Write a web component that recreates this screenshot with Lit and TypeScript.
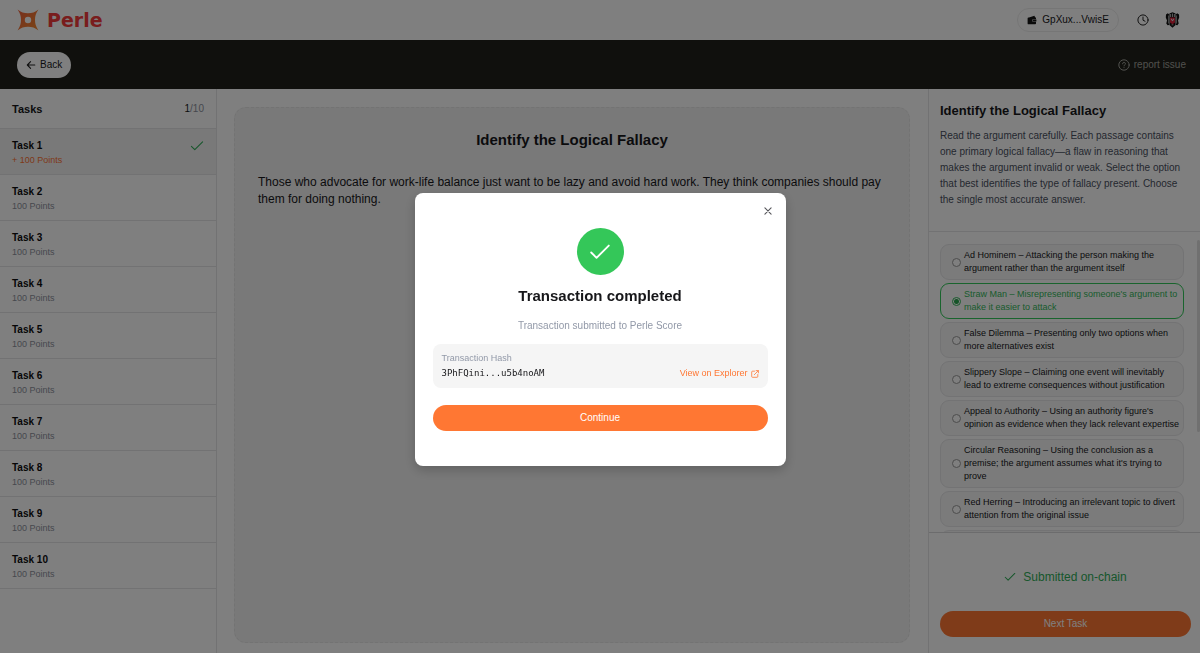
import { LitElement, html, css, svg } from "lit";
import { customElement, state } from "lit/decorators.js";
import { classMap } from "lit/directives/class-map.js";

const tasks = Array.from({ length: 10 }, (_, i) => ({ id: i + 1, points: 100, done: i === 0 }));

const options = [
  "Ad Hominem – Attacking the person making the argument rather than the argument itself",
  "Straw Man – Misrepresenting someone's argument to make it easier to attack",
  "False Dilemma – Presenting only two options when more alternatives exist",
  "Slippery Slope – Claiming one event will inevitably lead to extreme consequences without justification",
  "Appeal to Authority – Using an authority figure's opinion as evidence when they lack relevant expertise",
  "Circular Reasoning – Using the conclusion as a premise; the argument assumes what it's trying to prove",
  "Red Herring – Introducing an irrelevant topic to divert attention from the original issue",
  "Hasty Generalization",
];

const check = (size: number, width: number) => html`<svg width=${size} height=${size} viewBox="0 0 14 14" fill="none" stroke="currentColor" stroke-width=${width} stroke-linecap="round" stroke-linejoin="round" aria-hidden="true">${svg`<path d="M1.400 7.300 4.800 10.700 12.600 2.900"/>`}</svg>`;

@customElement("app-root")
export class AppRoot extends LitElement {
  static styles = css`
    :host {
      display: block;
      font-family: "Liberation Sans", Arial, sans-serif;
      font-size: 10px;
      line-height: 16px;
      color: #17171a;
    }
    * { box-sizing: border-box; }
    h1, h2, h3, p, ul { margin: 0; padding: 0; }
    button { font: inherit; color: inherit; border: 0; cursor: pointer; }
    svg { display: block; flex: none; }
    .page { display: flex; flex-direction: column; height: 100vh; background: #fff; }
    .top {
      flex: none; height: 40px; padding: 0 20px 0 17px;
      display: flex; align-items: center; justify-content: space-between;
    }
    .brand {
      display: flex; align-items: center; gap: 8px; text-decoration: none; color: #f23a3a;
      font-family: "DejaVu Sans", sans-serif; font-weight: 700; font-size: 19px; line-height: 20px;
    }
    .account { display: flex; align-items: center; gap: 18px; }
    .wallet {
      display: flex; align-items: center; gap: 5px; height: 24px; padding: 0 9px;
      border: 1px solid #ececec; border-radius: 12px; background: #fff;
    }
    .icons { display: flex; align-items: center; gap: 16px; }
    .plain { background: none; padding: 0; display: flex; }
    .bar {
      flex: none; height: 49px; padding: 0 14px 0 17px; background: #20211a;
      display: flex; align-items: center; justify-content: space-between;
    }
    .back {
      display: flex; align-items: center; gap: 4px; height: 26px; padding: 0 9px;
      border-radius: 13px; background: #fff;
    }
    .report { display: flex; align-items: center; gap: 4px; color: #a2a29c; text-decoration: none; }
    .body { flex: 1; min-height: 0; display: grid; grid-template-columns: 217px minmax(0, 1fr) 272px; }
    .side { border-right: 1px solid #e4e4e6; overflow: hidden; }
    .side-head {
      height: 40px; padding: 0 12px; border-bottom: 1px solid #e4e4e6;
      display: flex; align-items: center; justify-content: space-between;
    }
    .side-head h2 { font-size: 11px; line-height: 16px; }
    .count { color: #8d919c; }
    .count span { color: #17171a; }
    .tasks { list-style: none; }
    .task {
      height: 46px; padding: 10px 12px 0; border-bottom: 1px solid #e4e4e6;
      display: flex; align-items: flex-start; justify-content: space-between;
    }
    .task.done { background: #f3f3f3; color: #2fae58; }
    .task h3 { font-size: 10px; line-height: 14px; color: #0c0c0e; }
    .task p { font-size: 9px; line-height: 14px; color: #8d919c; }
    .task.done p { color: #fd7434; }
    .main { padding: 18px 18px 10px 17px; display: flex; }
    .card { flex: 1; padding: 22px 23px; border: 1px dashed #e6e6e6; border-radius: 12px; background: #f2f2f2; }
    .card h1 { font-size: 15px; line-height: 20px; text-align: center; }
    .card p { margin-top: 24px; font-size: 12px; line-height: 17px; }
    .panel { border-left: 1px solid #e4e4e6; display: flex; flex-direction: column; min-height: 0; }
    .intro { flex: none; padding: 13px 11px 23px; border-bottom: 1px solid #e4e4e6; }
    .intro h2 { font-size: 13px; line-height: 18px; }
    .intro p { margin-top: 8px; line-height: 16px; padding-right: 6px; color: #4a5060; }
    .options {
      flex: 1; min-height: 0; padding: 12px 16px 12px 11px; overflow: hidden auto;
      display: flex; flex-direction: column; gap: 3px; scrollbar-width: none;
    }
    .scroller { flex: 1; min-height: 0; display: flex; position: relative; }
    .thumb { position: absolute; right: 0; top: 8px; width: 3px; height: 64%; background: #e0e0e0; border-radius: 2px; }
    .option {
      flex: none; display: flex; align-items: center; gap: 3px; padding: 4px 2px 4px 11px;
      border: 1px solid #e6e6e8; border-radius: 9px; background: #f6f6f6;
      font-size: 9px; line-height: 13px; cursor: pointer;
    }
    .option.on { border-color: #33c95a; color: #33b85a; background: #fff; }
    .option input {
      appearance: none; flex: none; width: 9px; height: 9px; margin: 0;
      border: 1px solid #9a9a9a; border-radius: 50%; background: #fff;
    }
    .option.on input { border-color: #33b85a; background: radial-gradient(circle, #2aa850 2px, #fff 3px); }
    .submit { flex: none; padding: 35px 9px 16px 11px; border-top: 1px solid #d8d8da; }
    .status {
      display: flex; justify-content: center; align-items: center; gap: 7px; margin-bottom: 25px;
      font-size: 12px; line-height: 18px; color: #2fae58;
    }
    .primary {
      display: block; width: 100%; height: 26px; padding: 0; border-radius: 13px;
      background: #ff7733; color: #fff;
    }
    .overlay {
      position: fixed; inset: 0; background: rgba(0, 0, 0, 0.5);
      display: flex; align-items: center; justify-content: center; padding-top: 6px;
    }
    .modal {
      position: relative; width: 371px; max-width: 100%; padding: 35px 18px; border-radius: 8px; background: #fff;
      display: flex; flex-direction: column; align-items: center;
      box-shadow: 0 4px 12px rgba(0, 0, 0, 0.2);
    }
    .close { position: absolute; top: 13px; right: 13px; color: #55555a; }
    .badge {
      width: 47px; height: 47px; border-radius: 50%; background: #34c759; color: #fff;
      display: flex; align-items: center; justify-content: center;
    }
    .modal h2 { margin-top: 11px; font-size: 15px; line-height: 20px; }
    .note { margin-top: 12px; color: #9299a8; }
    .hash {
      width: 100%; margin: 10px 0 17px; padding: 7px 9px; border-radius: 8px; background: #f5f5f5;
      display: flex; align-items: flex-end; justify-content: space-between; font-size: 9px; line-height: 15px;
    }
    .hash p { color: #9299a8; }
    .mono { font-family: "DejaVu Sans Mono", monospace; }
    .hash a { display: flex; align-items: center; gap: 3px; color: #ff7733; text-decoration: none; }
  `;

  @state() private selected = 1;
  @state() private open = true;

  private close = () => { this.open = false; };

  render() {
    return html`
      <div class="page">
        <header class="top">
          <a class="brand" href="#">
            <svg width="22" height="22" viewBox="0 0 22 22" aria-hidden="true">
              <defs><linearGradient id="g" x1="0" y1="0" x2="1" y2="1"><stop offset="0" stop-color="#f0603c"/><stop offset="1" stop-color="#f58a2c"/></linearGradient></defs>
              <path fill="url(#g)" fill-rule="evenodd" d="M.6.6C4 3.400 7 4.300 11 4.300S18 3.400 21.400.6C18.800 4.500 18 7.500 18 11s.8 6.500 3.400 10.400C18 18.600 15 17.700 11 17.700S4 18.600.6 21.400C3.200 17.500 4 14.500 4 11S3.200 4.500.6.6ZM11 7.800a3.200 3.200 0 1 0 0 6.400 3.200 3.200 0 0 0 0-6.400Z"/>
            </svg>
            <span>Perle</span>
          </a>
          <div class="account">
            <button class="wallet">
              <svg width="10" height="10" viewBox="0 0 10 10" fill="#151515" aria-hidden="true"><path d="M2 2.600 7.400.7 8.200 2.600H9V4.200H6.400a1.300 1.300 0 0 0 0 2.600H9v1.700a.8.8 0 0 1-.8.8H1.500a.9.900 0 0 1-.9-.9V3.500A.9.900 0 0 1 1.500 2.600Z"/><path d="M6.400 4.600H9.400V6.400H6.400a.9.900 0 0 1 0-1.800Z"/></svg>
              <span>GpXux...VwisE</span>
            </button>
            <div class="icons">
              <button class="plain" aria-label="History">
                <svg width="12" height="12" viewBox="0 0 12 12" fill="none" stroke="#222" stroke-width="1" stroke-linecap="round" stroke-linejoin="round"><circle cx="6" cy="6" r="5.100"/><path d="M6 3V6.200L8 7.200"/></svg>
              </button>
              <button class="plain" aria-label="Profile">
                <svg width="15" height="16" viewBox="0 0 15 16">
                  <path fill="#111" d="M1 2.500 2.800 1.300 4 2.200V13L2.600 13.200 1.300 11.500 2 8.500.8 5.500ZM14 2.500 12.200 1.300 11 2.200V13L12.400 13.200 13.700 11.500 13 8.500 14.200 5.500Z"/>
                  <path fill="#111" d="M4.400 1.500 7.500.2 10.600 1.500V13L7.500 15.800 4.400 13Z"/>
                  <path fill="#ddd" d="M5.300 2H6.100V5H5.300ZM7.100 1.500H7.900V5H7.100ZM8.900 2H9.700V5H8.900ZM3 3.500H3.600V11.500H3ZM11.400 3.500H12V11.500H11.400Z"/>
                  <path fill="#d8233a" d="M5 5.500H10V10.500L7.500 12.200 5 10.500Z"/>
                  <path fill="#ddd" d="M6 6.200 7.500 8 9 6.200V7.800L7.500 9.200 6 7.800ZM6.600 12.400H8.400V13.200H6.600Z"/>
                </svg>
              </button>
            </div>
          </div>
        </header>

        <nav class="bar">
          <button class="back">
            <svg width="10" height="10" viewBox="0 0 10 10" fill="none" stroke="#222" stroke-width="1.100" stroke-linecap="round" stroke-linejoin="round" aria-hidden="true"><path d="M8.800 5H1.500M4.600 1.700 1.300 5 4.600 8.300"/></svg>
            <span>Back</span>
          </button>
          <a class="report" href="#">
            <svg width="12" height="12" viewBox="0 0 12 12" fill="none" stroke="currentColor" stroke-width="1" stroke-linecap="round" aria-hidden="true"><circle cx="6" cy="6" r="5.200"/><path d="M4.600 4.800a1.400 1.400 0 1 1 2 1.200C6.200 6.200 6 6.400 6 6.900M6 8.600V8.700"/></svg>
            <span>report issue</span>
          </a>
        </nav>

        <div class="body">
          <aside class="side">
            <div class="side-head"><h2>Tasks</h2><div class="count"><span>1</span>/10</div></div>
            <ul class="tasks">
              ${tasks.map((t) => html`
                <li class=${classMap({ task: true, done: t.done })}>
                  <div><h3>Task ${t.id}</h3><p>${t.done ? "+ " : ""}${t.points} Points</p></div>
                  ${t.done ? check(14, 1.1) : ""}
                </li>`)}
            </ul>
          </aside>

          <main class="main">
            <article class="card">
              <h1>Identify the Logical Fallacy</h1>
              <p>Those who advocate for work-life balance just want to be lazy and avoid hard work. They think companies should pay them for doing nothing.</p>
            </article>
          </main>

          <section class="panel">
            <div class="intro">
              <h2>Identify the Logical Fallacy</h2>
              <p>Read the argument carefully. Each passage contains one primary logical fallacy—a flaw in reasoning that makes the argument invalid or weak. Select the option that best identifies the type of fallacy present. Choose the single most accurate answer.</p>
            </div>
            <div class="scroller">
              <div class="options" role="radiogroup" aria-label="Fallacy type">
                ${options.map((text, i) => html`
                  <label class=${classMap({ option: true, on: i === this.selected })}>
                    <input type="radio" name="fallacy" .checked=${i === this.selected} @change=${() => { this.selected = i; }} />
                    <span>${text}</span>
                  </label>`)}
              </div>
              <div class="thumb"></div>
            </div>
            <div class="submit">
              <div class="status">${check(12, 1.2)}<span>Submitted on-chain</span></div>
              <button class="primary">Next Task</button>
            </div>
          </section>
        </div>
      </div>

      ${this.open ? html`
        <div class="overlay">
          <div class="modal" role="dialog" aria-modal="true" aria-labelledby="dialog-title">
            <button class="plain close" aria-label="Close" @click=${this.close}>
              <svg width="10" height="10" viewBox="0 0 10 10" fill="none" stroke="currentColor" stroke-width="1.100" stroke-linecap="round"><path d="M1.900 1.900 8.100 8.100M8.100 1.900 1.900 8.100"/></svg>
            </button>
            <div class="badge">${check(22, 1.2)}</div>
            <h2 id="dialog-title">Transaction completed</h2>
            <p class="note">Transaction submitted to Perle Score</p>
            <div class="hash">
              <div><p>Transaction Hash</p><div class="mono">3PhFQini...u5b4noAM</div></div>
              <a href="#">
                <span>View on Explorer</span>
                <svg width="8" height="8" viewBox="0 0 8 8" fill="none" stroke="currentColor" stroke-width=".8" stroke-linecap="round" stroke-linejoin="round" aria-hidden="true"><path d="M3.500 1.200H1.500a.8.800 0 0 0-.8.800V6.500a.8.800 0 0 0 .8.800H6a.8.800 0 0 0 .8-.8V4.500M5.100.6H7.400V2.900M7.300.7 3.300 4.700"/></svg>
              </a>
            </div>
            <button class="primary" @click=${this.close}>Continue</button>
          </div>
        </div>` : ""}
    `;
  }
}
